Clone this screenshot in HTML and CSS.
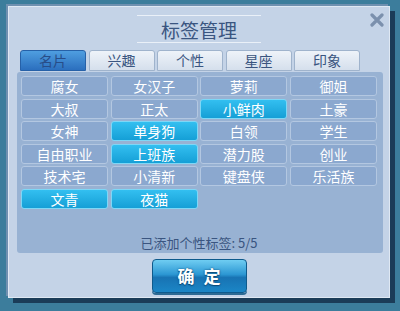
FILE: index.html
```html
<!DOCTYPE html>
<html lang="zh">

<head>
    <meta charset="UTF-8">
    <title>标签管理</title>
    <link rel="stylesheet" href="styles.css">
</head>

<body>
    <div class="window">
        <div class="title">
            <span>标签管理</span>
            <svg class="close" width="14" height="14" viewBox="0 0 14 14">
                <path d="M2 2 L12 12 M12 2 L2 12" stroke="#7b90ad" stroke-width="3.2" stroke-linecap="round" />
            </svg>
        </div>

        <div class="tabs">
            <div class="tab active">名片</div>
            <div class="tab">兴趣</div>
            <div class="tab">个性</div>
            <div class="tab">星座</div>
            <div class="tab">印象</div>
        </div>

        <div class="content">
            <div class="tags">
                <div class="tag">腐女</div>
                <div class="tag">女汉子</div>
                <div class="tag">萝莉</div>
                <div class="tag">御姐</div>
                <div class="tag">大叔</div>
                <div class="tag">正太</div>
                <div class="tag on">小鲜肉</div>
                <div class="tag">土豪</div>
                <div class="tag">女神</div>
                <div class="tag on">单身狗</div>
                <div class="tag">白领</div>
                <div class="tag">学生</div>
                <div class="tag">自由职业</div>
                <div class="tag on">上班族</div>
                <div class="tag">潜力股</div>
                <div class="tag">创业</div>
                <div class="tag">技术宅</div>
                <div class="tag">小清新</div>
                <div class="tag">键盘侠</div>
                <div class="tag">乐活族</div>
                <div class="tag on">文青</div>
                <div class="tag on">夜猫</div>
            </div>
            <div class="count">已添加个性标签: 5/5</div>
        </div>

        <div class="footer">
            <div class="ok">确定</div>
        </div>
    </div>
</body>

</html>
```

FILE: styles.css
```css
body {
    margin: 0;
    width: 400px;
    height: 311px;
    background: #3c7d9c;
    font-family: "Noto Sans CJK SC", "Noto Sans", sans-serif;
    overflow: hidden;
}

.window {
    margin: 6px 0 0 8px;
    width: 382px;
    height: 292px;
    box-sizing: border-box;
    background: #c4d3e7;
    border: 1px solid #dfe8f3;
    box-shadow: -2px -2px 0 #6f90b0, 5px 5px 0 #1b3c58;
    display: flex;
    flex-direction: column;
}

/* title strip with thin light rules above and below */
.title {
    height: 26px;
    margin: 8px auto 0;
    width: 124px;
    display: flex;
    justify-content: center;
    align-items: center;
    font-size: 19px;
    color: #3a5580;
    border-top: 1px solid #eaf0f8;
    border-bottom: 1px solid #eaf0f8;
}

.close {
    position: absolute;
    left: 370px;
    top: 13px;
}

.tabs {
    display: flex;
    gap: 2.5px;
    margin: 7px 0 0 11px;
}

.tab {
    width: 66px;
    height: 21px;
    box-sizing: border-box;
    border: 1px solid #9fb3cc;
    border-radius: 3px 3px 0 0;
    background: linear-gradient(#eef3f9, #d5dfec);
    color: #3a5580;
    font-size: 14px;
    line-height: 19px;
    text-align: center;
}

.tab.active {
    background: linear-gradient(#4f9ee0, #2b6fbe);
    border-color: #2661a8;
    color: #284d88;
}

.content {
    margin: 1px 0 0 8px;
    width: 366px;
    height: 181px;
    box-sizing: border-box;
    background: #98b2d3;
    border-radius: 3px;
    padding: 4px 6px 0 4px;
    display: flex;
    flex-direction: column;
}

.tags {
    display: grid;
    grid-template-columns: repeat(4, 1fr);
    grid-auto-rows: 20px;
    gap: 2.5px 2.5px;
}

.tag {
    box-sizing: border-box;
    border: 1px solid #b3c7e1;
    border-radius: 3px;
    background: #8ba8cf;
    color: #ffffff;
    font-size: 14px;
    line-height: 18px;
    text-align: center;
}

.tag.on {
    background: linear-gradient(#33bff0, #159fd6);
    border-color: #7ed7f6;
}

.count {
    margin-top: auto;
    margin-bottom: 1px;
    text-align: center;
    font-size: 13px;
    color: #3a5580;
}

.footer {
    display: flex;
    justify-content: center;
    margin-top: 6px;
}

.ok {
    width: 95px;
    height: 34px;
    box-sizing: border-box;
    border: 1px solid #0e5a8c;
    border-radius: 4px;
    background: linear-gradient(#6fcdf2 0%, #2c97d3 45%, #1873b3 55%, #1b86c6 100%);
    box-shadow: 0 2px 0 #2c6a94;
    color: #ffffff;
    font-size: 17px;
    font-weight: bold;
    line-height: 32px;
    letter-spacing: 9px;
    text-indent: 9px;
    text-align: center;
    text-shadow: 0 0 2px #0b4a78, 0 1px 1px #0b4a78;
}
```
